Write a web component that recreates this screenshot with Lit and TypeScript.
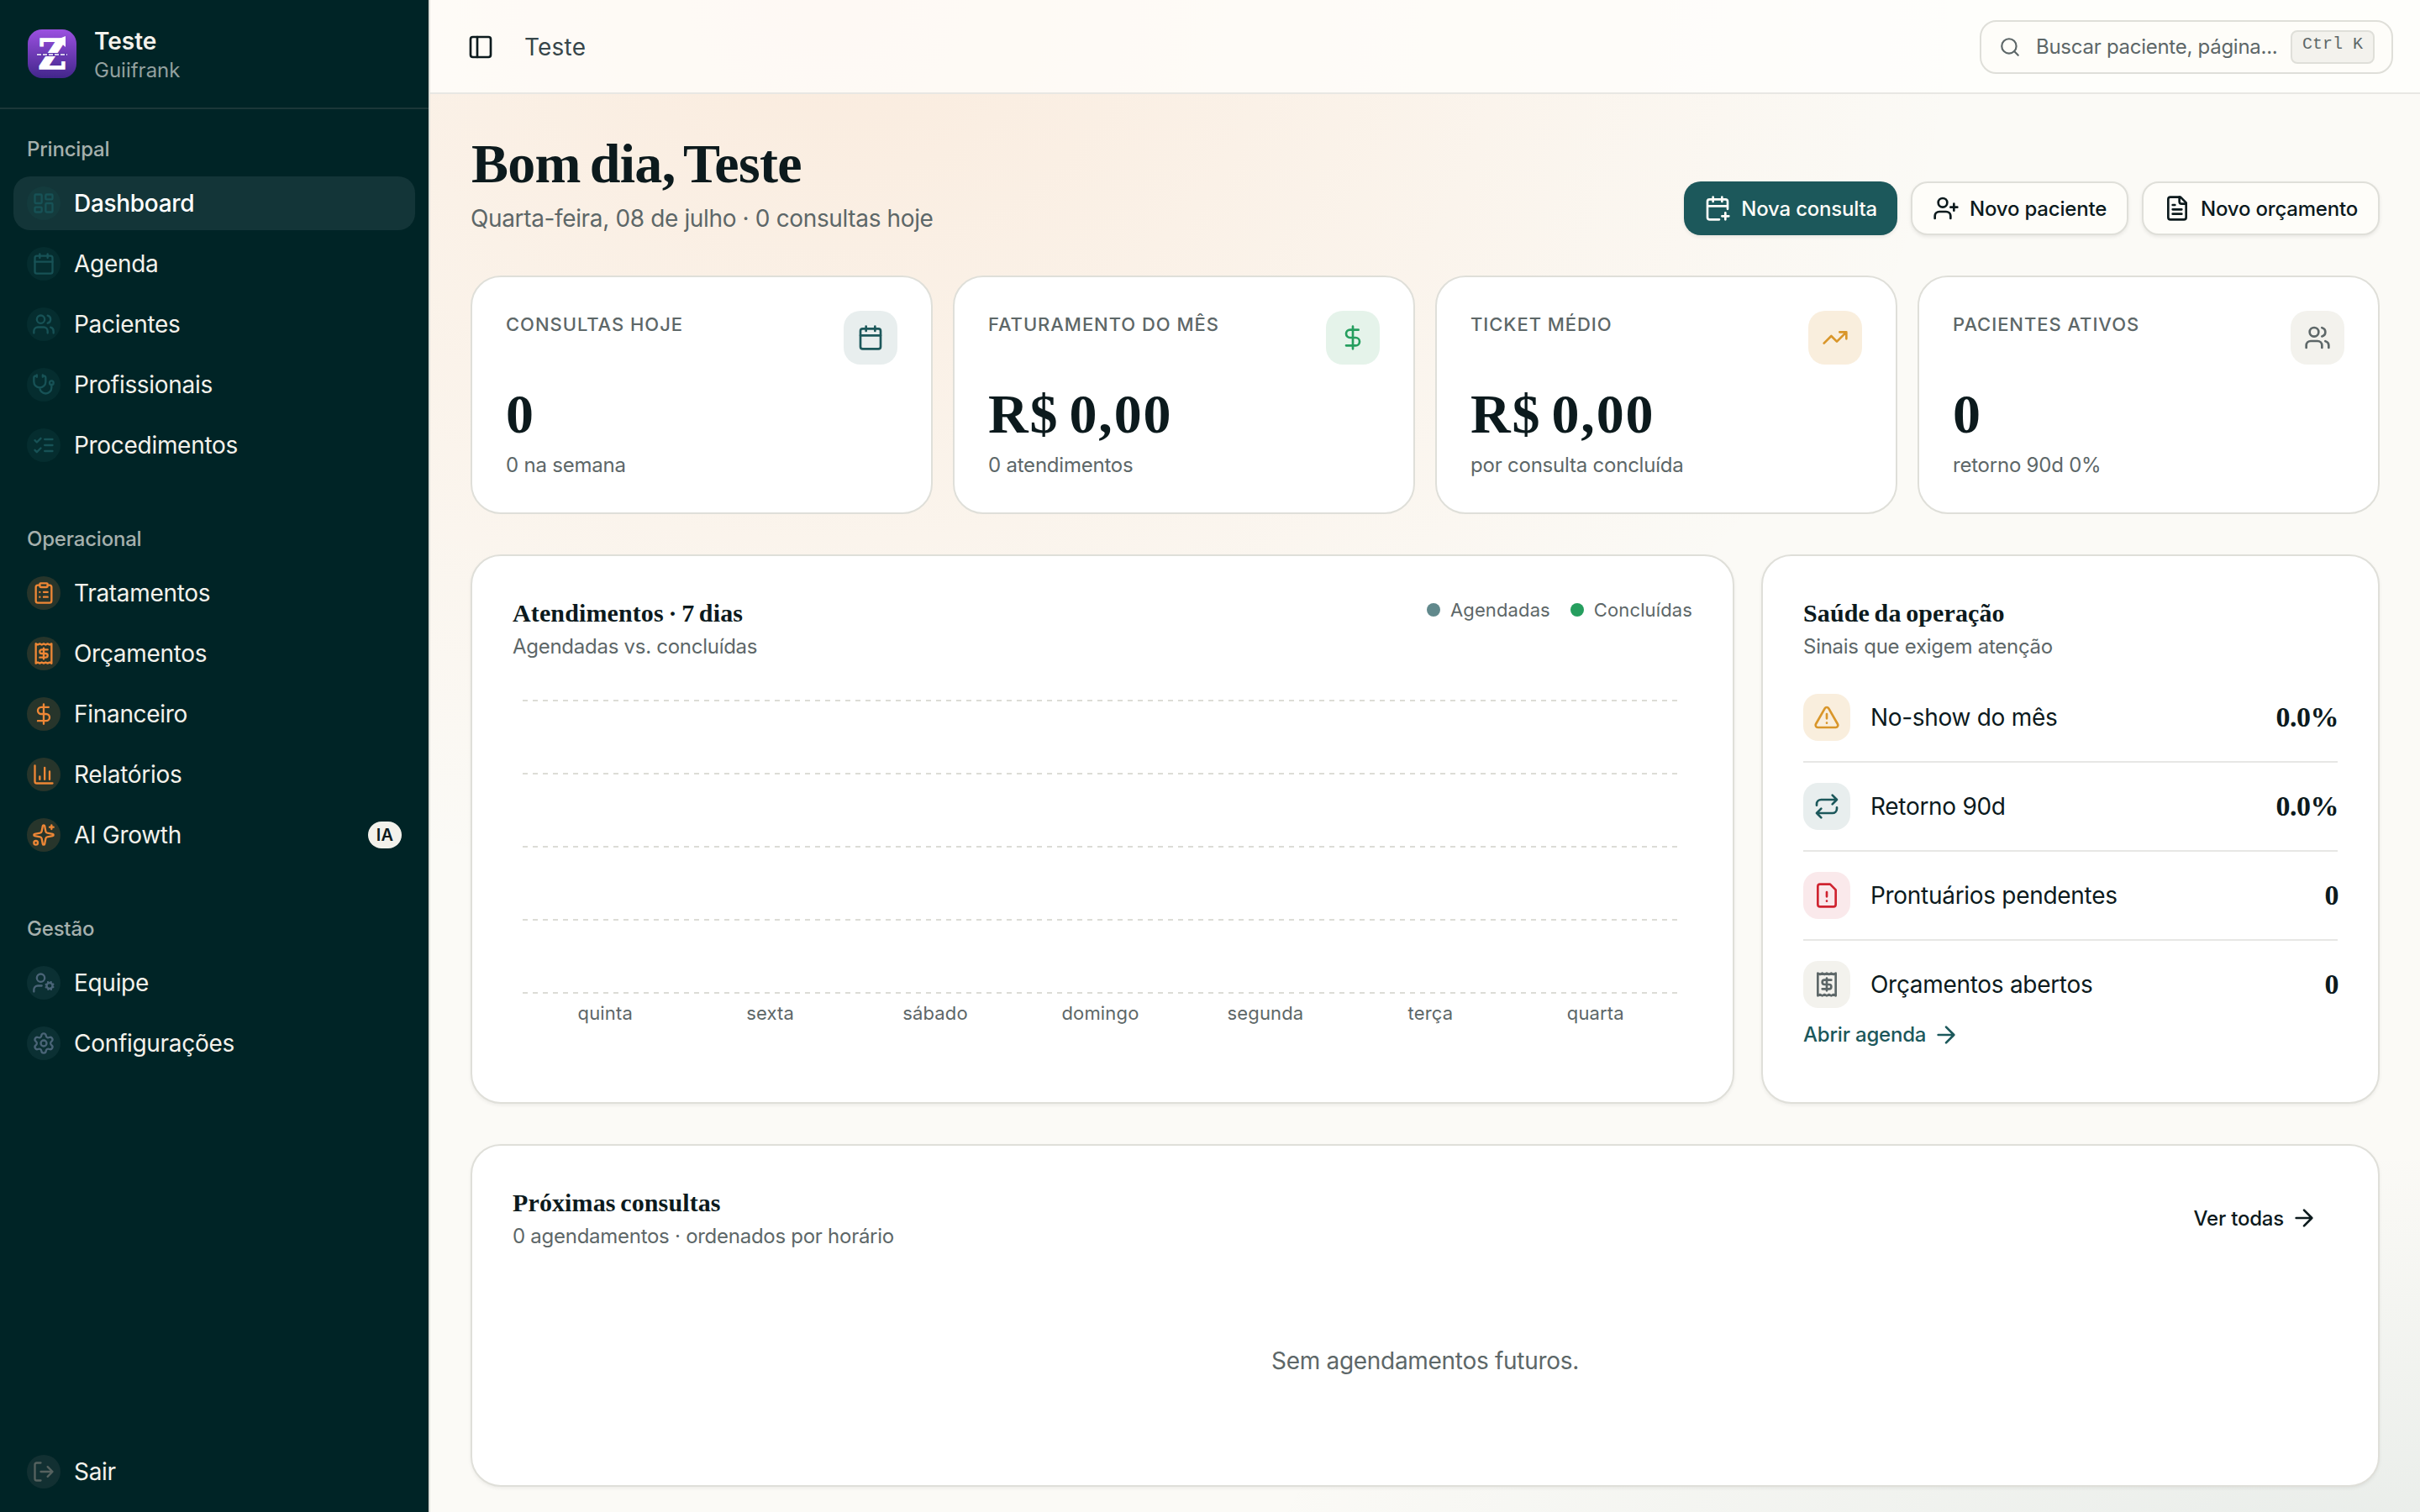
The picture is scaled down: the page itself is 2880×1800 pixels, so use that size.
import { LitElement, css, html, svg, nothing } from 'lit';
import { customElement, property } from 'lit/decorators.js';
import { classMap } from 'lit/directives/class-map.js';

type Tone = 'teal' | 'orange' | 'slate' | 'muted' | 'green' | 'amber' | 'red';

interface NavItem {
    label: string;
    icon: string;
    badge?: string;
    active?: boolean;
}

interface NavGroup {
    label: string;
    tone: Tone;
    items: NavItem[];
}

const userBody = svg`<path d="M16 21v-2a4 4 0 0 0-4-4H6a4 4 0 0 0-4 4v2"/><circle cx="9" cy="7" r="4"/>`;
const fileBody = svg`<path d="M15 2H6a2 2 0 0 0-2 2v16a2 2 0 0 0 2 2h12a2 2 0 0 0 2-2V7Z"/>`;

const icons: Record<string, unknown> = {
    dashboard: svg`<rect x="3" y="3" width="7" height="9" rx="1"/><rect x="14" y="3" width="7" height="5" rx="1"/><rect x="14" y="12" width="7" height="9" rx="1"/><rect x="3" y="16" width="7" height="5" rx="1"/>`,
    calendar: svg`<path d="M8 2v4M16 2v4M3 10h18"/><rect x="3" y="4" width="18" height="18" rx="2"/>`,
    calendarPlus: svg`<path d="M16 19h6M16 2v4M19 16v6M21 12.598V6a2 2 0 0 0-2-2H5a2 2 0 0 0-2 2v14a2 2 0 0 0 2 2h8.5M3 10h18M8 2v4"/>`,
    users: svg`${userBody}<path d="M22 21v-2a4 4 0 0 0-3-3.87M16 3.13a4 4 0 0 1 0 7.75"/>`,
    userPlus: svg`${userBody}<path d="M19 8v6M22 11h-6"/>`,
    userCog: svg`<circle cx="9" cy="7" r="4"/><path d="M10 15H6a4 4 0 0 0-4 4v2"/><circle cx="18" cy="15" r="3"/><path d="m21.7 16.4-.9-.3M15.2 13.9l-.9-.3M16.6 18.7l.3-.9M19.1 12.2l.3-.9M19.6 18.7l-.4-1M16.8 12.3l-.4-1M14.3 16.6l1-.4M20.7 13.8l1-.4"/>`,
    stethoscope: svg`<path d="M11 2v2M5 2v2M5 3H4a2 2 0 0 0-2 2v4a6 6 0 0 0 12 0V5a2 2 0 0 0-2-2h-1M8 15a6 6 0 0 0 12 0v-3"/><circle cx="20" cy="10" r="2"/>`,
    checks: svg`<path d="m3 17 2 2 4-4M3 7l2 2 4-4M13 6h8M13 12h8M13 18h8"/>`,
    clipboard: svg`<rect x="8" y="2" width="8" height="4" rx="1"/><path d="M16 4h2a2 2 0 0 1 2 2v14a2 2 0 0 1-2 2H6a2 2 0 0 1-2-2V6a2 2 0 0 1 2-2h2M12 11h4M12 16h4M8 11h.01M8 16h.01"/>`,
    receipt: svg`<path d="M4 2v20l2-1 2 1 2-1 2 1 2-1 2 1 2-1 2 1V2l-2 1-2-1-2 1-2-1-2 1-2-1-2 1Z"/><path d="M16 8h-6a2 2 0 1 0 0 4h4a2 2 0 1 1 0 4H8M12 17.5v-11"/>`,
    dollar: svg`<path d="M12 2v20M17 5H9.5a3.5 3.5 0 0 0 0 7h5a3.5 3.5 0 0 1 0 7H6"/>`,
    chart: svg`<path d="M3 3v16a2 2 0 0 0 2 2h16M18 17V9M13 17V5M8 17v-3"/>`,
    sparkles: svg`<path d="M11.017 2.814a1 1 0 0 1 1.966 0l1.051 5.558a2 2 0 0 0 1.594 1.594l5.558 1.051a1 1 0 0 1 0 1.966l-5.558 1.051a2 2 0 0 0-1.594 1.594l-1.051 5.558a1 1 0 0 1-1.966 0l-1.051-5.558a2 2 0 0 0-1.594-1.594l-5.558-1.051a1 1 0 0 1 0-1.966l5.558-1.051a2 2 0 0 0 1.594-1.594zM20 2v4M22 4h-4"/><circle cx="4" cy="20" r="2"/>`,
    settings: svg`<path d="M9.671 4.136a2.34 2.34 0 0 1 4.659 0 2.34 2.34 0 0 0 3.319 1.915 2.34 2.34 0 0 1 2.33 4.033 2.34 2.34 0 0 0 0 3.831 2.34 2.34 0 0 1-2.33 4.033 2.34 2.34 0 0 0-3.319 1.915 2.34 2.34 0 0 1-4.659 0 2.34 2.34 0 0 0-3.32-1.915 2.34 2.34 0 0 1-2.33-4.033 2.34 2.34 0 0 0 0-3.831A2.34 2.34 0 0 1 6.35 6.051a2.34 2.34 0 0 0 3.319-1.915"/><circle cx="12" cy="12" r="3"/>`,
    logout: svg`<path d="M9 21H5a2 2 0 0 1-2-2V5a2 2 0 0 1 2-2h4M16 17l5-5-5-5M21 12H9"/>`,
    panel: svg`<rect x="3" y="3" width="18" height="18" rx="2"/><path d="M9 3v18"/>`,
    search: svg`<circle cx="11" cy="11" r="8"/><path d="m21 21-4.3-4.3"/>`,
    fileText: svg`${fileBody}<path d="M14 2v4a2 2 0 0 0 2 2h4M10 9H8M16 13H8M16 17H8"/>`,
    fileWarning: svg`${fileBody}<path d="M12 9v4M12 17h.01"/>`,
    trending: svg`<path d="M16 7h6v6M22 7l-8.5 8.5-5-5L2 17"/>`,
    alert: svg`<path d="m21.73 18-8-14a2 2 0 0 0-3.48 0l-8 14A2 2 0 0 0 4 21h16a2 2 0 0 0 1.73-3M12 9v4M12 17h.01"/>`,
    repeat: svg`<path d="m17 2 4 4-4 4M3 11v-1a4 4 0 0 1 4-4h14M7 22l-4-4 4-4M21 13v1a4 4 0 0 1-4 4H3"/>`,
    arrow: svg`<path d="M5 12h14M12 5l7 7-7 7"/>`,
};

const navigation: NavGroup[] = [
    {
        label: 'Principal',
        tone: 'teal',
        items: [
            { label: 'Dashboard', icon: 'dashboard', active: true },
            { label: 'Agenda', icon: 'calendar' },
            { label: 'Pacientes', icon: 'users' },
            { label: 'Profissionais', icon: 'stethoscope' },
            { label: 'Procedimentos', icon: 'checks' },
        ],
    },
    {
        label: 'Operacional',
        tone: 'orange',
        items: [
            { label: 'Tratamentos', icon: 'clipboard' },
            { label: 'Orçamentos', icon: 'receipt' },
            { label: 'Financeiro', icon: 'dollar' },
            { label: 'Relatórios', icon: 'chart' },
            { label: 'AI Growth', icon: 'sparkles', badge: 'IA' },
        ],
    },
    {
        label: 'Gestão',
        tone: 'slate',
        items: [
            { label: 'Equipe', icon: 'userCog' },
            { label: 'Configurações', icon: 'settings' },
        ],
    },
];

const kpis: { label: string; value: string; hint: string; icon: string; tone: Tone }[] = [
    { label: 'Consultas hoje', value: '0', hint: '0 na semana', icon: 'calendar', tone: 'teal' },
    { label: 'Faturamento do mês', value: 'R$ 0,00', hint: '0 atendimentos', icon: 'dollar', tone: 'green' },
    { label: 'Ticket médio', value: 'R$ 0,00', hint: 'por consulta concluída', icon: 'trending', tone: 'amber' },
    { label: 'Pacientes ativos', value: '0', hint: 'retorno 90d 0%', icon: 'users', tone: 'muted' },
];

const signals: { label: string; value: string; icon: string; tone: Tone }[] = [
    { label: 'No-show do mês', value: '0.0%', icon: 'alert', tone: 'amber' },
    { label: 'Retorno 90d', value: '0.0%', icon: 'repeat', tone: 'teal' },
    { label: 'Prontuários pendentes', value: '0', icon: 'fileWarning', tone: 'red' },
    { label: 'Orçamentos abertos', value: '0', icon: 'receipt', tone: 'muted' },
];

const weekdays = ['quinta', 'sexta', 'sábado', 'domingo', 'segunda', 'terça', 'quarta'];

@customElement('ui-icon')
export class UiIcon extends LitElement {
    @property() name = '';

    static styles = css`
        :host {
          display: block;
          flex: none;
          width: var(--icon-size, 32px);
          height: var(--icon-size, 32px);
        }

        svg {
          display: block;
          width: 100%;
          height: 100%;
          fill: none;
          stroke: currentColor;
          stroke-width: 2;
          stroke-linecap: round;
          stroke-linejoin: round;
        }
    `;

    render() {
        return html`<svg viewBox="0 0 24 24" aria-hidden="true">${icons[this.name]}</svg>`;
    }
}

@customElement('app-sidebar')
export class AppSidebar extends LitElement {
    static styles = css`
        :host {
          display: flex;
          flex-direction: column;
          box-sizing: border-box;
          width: 512px;
          height: 100%;
          background: #002426;
          border-right: 2px solid #dfdfd9;
          color: #f4f2ec;
          font-size: 28px;
        }

        .brand {
          display: flex;
          align-items: center;
          gap: 20px;
          height: 128px;
          padding: 0 32px;
          border-bottom: 2px solid #1b3738;
        }

        .logo {
          width: 60px;
          height: 60px;
        }

        .logo text {
          font-family: 'DejaVu Serif', serif;
          font-weight: 700;
          font-size: 49px;
        }

        .brand-text {
          display: flex;
          flex-direction: column;
          padding-top: 4px;
        }

        .brand-name {
          font-weight: 600;
          line-height: 36px;
        }

        .brand-user {
          color: #93a09f;
          font-size: 24px;
          line-height: 34px;
        }

        nav {
          display: flex;
          flex-direction: column;
          flex: 1;
          gap: 16px;
        }

        .group,
        footer {
          display: flex;
          flex-direction: column;
          gap: 8px;
          padding: 16px;
        }

        .group-label {
          height: 64px;
          margin-bottom: -8px;
          padding: 0 16px;
          color: #a5b0ad;
          font-size: 24px;
          font-weight: 500;
          letter-spacing: -0.2px;
          line-height: 64px;
        }

        .item {
          display: flex;
          align-items: center;
          gap: 16px;
          height: 64px;
          padding: 0 16px;
          border-radius: 20px;
        }

        .item.active {
          background: #133538;
          color: #fff;
          font-weight: 500;
        }

        .item .label {
          flex: 1;
          letter-spacing: -0.3px;
        }

        .disc {
          --icon-size: 28px;
          display: grid;
          place-items: center;
          width: 40px;
          height: 40px;
          border-radius: 50%;
        }

        .disc.teal {
          background: rgba(28, 88, 91, 0.18);
          color: #175256;
        }

        .disc.orange {
          background: #27352b;
          color: #ee8736;
        }

        .disc.slate {
          background: #0b3033;
          color: #4a6477;
        }

        .disc.muted {
          background: #123032;
          color: #56625f;
        }

        .badge {
          box-sizing: border-box;
          width: 40px;
          height: 32px;
          border-radius: 16px;
          background: #f3f1eb;
          color: #0b1a1c;
          font-size: 20px;
          font-weight: 600;
          letter-spacing: 0.3px;
          line-height: 32px;
          text-align: center;
        }
    `;

    private renderItem(item: NavItem, tone: Tone) {
        return html`
            <a class=${classMap({ item: true, active: !!item.active })}>
                <span class="disc ${tone}"><ui-icon name=${item.icon}></ui-icon></span>
                <span class="label">${item.label}</span>
                ${item.badge ? html`<span class="badge">${item.badge}</span>` : nothing}
            </a>
        `;
    }

    render() {
        return html`
            <div class="brand">
                <svg class="logo" viewBox="0 0 60 60">
                    <defs>
                        <linearGradient id="logo-fill" x1="0" y1="0" x2="0" y2="1">
                            <stop offset="0" stop-color="#9b50e0" />
                            <stop offset="1" stop-color="#42268b" />
                        </linearGradient>
                    </defs>
                    <rect x="1" y="1" width="58" height="58" rx="17" fill="url(#logo-fill)" />
                    <text x="30" y="48" text-anchor="middle" textLength="33" lengthAdjust="spacingAndGlyphs" fill="#fff" stroke="#fff" stroke-width="1.5">Z</text>
                    <path d="M36 13l10-4v13z" fill="#fff" />
                    <path d="M12 31h36" stroke="#6036ae" stroke-width="4" />
                    <path d="M12 31h36" stroke="#fff" stroke-width="1.6" stroke-dasharray="5 2" />
                </svg>
                <div class="brand-text">
                    <span class="brand-name">Teste</span>
                    <span class="brand-user">Guiifrank</span>
                </div>
            </div>
            <nav>
                ${navigation.map(group => html`
                    <div class="group">
                        <div class="group-label">${group.label}</div>
                        ${group.items.map(item => this.renderItem(item, group.tone))}
                    </div>
                `)}
            </nav>
            <footer>${this.renderItem({ label: 'Sair', icon: 'logout' }, 'muted')}</footer>
        `;
    }
}

@customElement('app-root')
export class AppRoot extends LitElement {
    static styles = css`
        :host {
          --ink: #0c1a1d;
          --muted: #5d6768;
          --line: #dfdfd9;
          --serif: 'Liberation Serif', serif;
          display: flex;
          width: 2880px;
          height: 1800px;
          overflow: hidden;
          color: var(--ink);
          font-family: Inter, sans-serif;
          font-size: 28px;
        }

        .page {
          display: flex;
          flex-direction: column;
          flex: 1;
          min-width: 0;
          background:
            radial-gradient(ellipse 1350px 1080px at 20% 0%, rgba(244, 150, 80, 0.15), transparent),
            radial-gradient(ellipse 1400px 520px at 100% 105%, rgba(28, 88, 91, 0.09), transparent),
            #fbfaf6;
        }

        .topbar {
          display: flex;
          align-items: center;
          justify-content: space-between;
          box-sizing: border-box;
          height: 112px;
          padding: 2px 32px 0 44px;
          border-bottom: 2px solid #e8e7e3;
          background: rgba(255, 255, 253, 0.7);
        }

        .crumb {
          display: flex;
          align-items: center;
          gap: 36px;
        }

        .crumb-text {
          color: #37464a;
          letter-spacing: 0.2px;
        }

        .search {
          --icon-size: 26px;
          display: flex;
          align-items: center;
          box-sizing: border-box;
          width: 492px;
          height: 64px;
          padding: 0 20px 0 21px;
          border: 2px solid var(--line);
          border-radius: 20px;
          background: #fefdf9;
          color: var(--muted);
          font-size: 24px;
        }

        .search .hint {
          flex: 1;
          margin-left: 18px;
          letter-spacing: -0.27px;
          line-height: 34px;
          margin-top: -1px;
          white-space: nowrap;
        }

        kbd {
          box-sizing: border-box;
          height: 40px;
          padding: 0 12px;
          border: 2px solid var(--line);
          border-radius: 8px;
          background: #f3f2ed;
          font-family: 'Liberation Mono', monospace;
          font-size: 20px;
          line-height: 29px;
          white-space: pre;
        }

        main {
          display: flex;
          flex-direction: column;
          gap: 48px;
          padding: 48px 48px 30px;
        }

        .hero {
          display: flex;
          align-items: flex-end;
          justify-content: space-between;
        }

        h1 {
          margin: 1px 0 10px 1px;
          font-family: var(--serif);
          font-size: 66px;
          font-weight: 700;
          letter-spacing: -0.7px;
          line-height: 68px;
          word-spacing: -5px;
        }

        .subtitle {
          margin: 0 0 -1px;
          color: var(--muted);
          letter-spacing: -0.36px;
          line-height: 42px;
        }

        .actions {
          display: flex;
          gap: 16px;
        }

        .button {
          display: flex;
          align-items: center;
          gap: 12px;
          box-sizing: border-box;
          height: 64px;
          padding: 0 24px;
          border: 2px solid var(--line);
          border-radius: 20px;
          background: #fefdf9;
          font-size: 24px;
          font-weight: 500;
          letter-spacing: -0.2px;
          white-space: nowrap;
          box-shadow: 0 2px 4px rgba(0, 0, 0, 0.08);
        }

        .button.primary {
          border: 0;
          background: #1c585b;
          color: #fdfcf8;
        }

        .button.plain {
          gap: 8px;
          border: 0;
          background: none;
          box-shadow: none;
        }

        .kpis {
          display: grid;
          grid-template-columns: repeat(4, 1fr);
          gap: 24px;
        }

        .card {
          box-sizing: border-box;
          padding: 48px;
          border: 2px solid var(--line);
          border-radius: 36px;
          background: #fff;
          box-shadow: 0 2px 4px rgba(0, 0, 0, 0.06);
        }

        .kpi {
          height: 284px;
          padding: 40px;
          box-shadow: none;
        }

        .kpi-top {
          display: flex;
          justify-content: space-between;
        }

        .kpi-label {
          color: var(--muted);
          font-size: 22px;
          font-weight: 500;
          letter-spacing: 0.95px;
          line-height: 32px;
          text-transform: uppercase;
        }

        .kpi-value {
          margin-top: 25px;
          font-family: var(--serif);
          font-size: 66px;
          font-weight: 700;
          letter-spacing: 1.8px;
          line-height: 68px;
          word-spacing: -6px;
        }

        .kpi-hint {
          margin-top: 10px;
          color: var(--muted);
          font-size: 24px;
          letter-spacing: -0.22px;
          line-height: 34px;
        }

        .chip {
          display: grid;
          place-items: center;
          width: 64px;
          height: 64px;
          border-radius: 20px;
        }

        .chip.small {
          width: 56px;
          height: 56px;
          border-radius: 18px;
        }

        .chip.teal {
          background: #e8eeee;
          color: #1c585b;
        }

        .chip.green {
          background: #e5f3ea;
          color: #259e5e;
        }

        .chip.amber {
          background: #f9eedd;
          color: #d9962a;
        }

        .chip.red {
          background: #fae9eb;
          color: #cf2430;
        }

        .chip.muted {
          background: #f3f2ed;
          color: var(--muted);
        }

        .panels {
          display: grid;
          grid-template-columns: 1504px 1fr;
          gap: 32px;
        }

        .panels .card {
          height: 654px;
        }

        .card-head {
          display: flex;
          align-items: center;
          justify-content: space-between;
          height: 76px;
        }

        h2 {
          margin: 0 0 3px;
          font-family: var(--serif);
          font-size: 30px;
          font-weight: 700;
          letter-spacing: 0.12px;
          line-height: 40px;
          word-spacing: -2px;
        }

        .card-note {
          margin: 0 0 -1px;
          color: var(--muted);
          font-size: 24px;
          letter-spacing: -0.27px;
          line-height: 34px;
        }

        .legend {
          display: flex;
          align-self: flex-start;
          gap: 24px;
          color: var(--muted);
          font-size: 22px;
          letter-spacing: 0.12px;
          line-height: 32px;
        }

        .legend span {
          display: flex;
          align-items: center;
          gap: 12px;
        }

        .legend span::before {
          content: '';
          width: 16px;
          height: 16px;
          border-radius: 50%;
          background: #61898c;
        }

        .legend .done::before {
          background: #259e5e;
        }

        .grid {
          display: flex;
          flex-direction: column;
          justify-content: space-between;
          height: 350px;
          margin: 47px 18px 0 12px;
        }

        .grid i {
          height: 2px;
          background: repeating-linear-gradient(to right, #dcdcd6 0 6px, transparent 6px 12px);
        }

        .days {
          display: grid;
          grid-template-columns: repeat(7, 1fr);
          margin: 7px 17px 0 12px;
          color: var(--muted);
          font-size: 22px;
          letter-spacing: 0.15px;
          line-height: 32px;
          text-align: center;
        }

        .signals {
          margin-top: 16px;
        }

        .signal {
          display: flex;
          align-items: center;
          gap: 24px;
          padding: 24px 0;
          border-bottom: 2px solid #e7e7e5;
        }

        .signal:last-child {
          padding-bottom: 0;
          border: 0;
        }

        .signal .name {
          flex: 1;
          letter-spacing: -0.3px;
        }

        .signal .value {
          margin-right: -1px;
          font-family: var(--serif);
          font-size: 34px;
          font-weight: 700;
          letter-spacing: -0.5px;
        }

        .link {
          display: flex;
          align-items: center;
          gap: 8px;
          margin-top: 15px;
          color: #1c585b;
          font-size: 24px;
          font-weight: 500;
          letter-spacing: -0.2px;
          line-height: 34px;
        }

        .upcoming {
          height: 408px;
        }

        .empty {
          display: grid;
          place-items: center;
          height: 200px;
          margin-top: 32px;
          color: var(--muted);
          letter-spacing: -0.3px;
        }
    `;

    private renderChart() {
        return html`
            <section class="card">
                <div class="card-head">
                    <div>
                        <h2>Atendimentos · 7 dias</h2>
                        <p class="card-note">Agendadas vs. concluídas</p>
                    </div>
                    <div class="legend"><span>Agendadas</span><span class="done">Concluídas</span></div>
                </div>
                <div class="grid"><i></i><i></i><i></i><i></i><i></i></div>
                <div class="days">${weekdays.map(day => html`<span>${day}</span>`)}</div>
            </section>
        `;
    }

    private renderSignals() {
        return html`
            <section class="card">
                <div class="card-head">
                    <div>
                        <h2>Saúde da operação</h2>
                        <p class="card-note">Sinais que exigem atenção</p>
                    </div>
                </div>
                <div class="signals">
                    ${signals.map(signal => html`
                        <div class="signal">
                            <span class="chip small ${signal.tone}"><ui-icon name=${signal.icon}></ui-icon></span>
                            <span class="name">${signal.label}</span>
                            <span class="value">${signal.value}</span>
                        </div>
                    `)}
                </div>
                <a class="link">Abrir agenda <ui-icon name="arrow"></ui-icon></a>
            </section>
        `;
    }

    render() {
        return html`
            <app-sidebar></app-sidebar>
            <div class="page">
                <header class="topbar">
                    <div class="crumb">
                        <ui-icon name="panel"></ui-icon>
                        <span class="crumb-text">Teste</span>
                    </div>
                    <div class="search">
                        <ui-icon name="search"></ui-icon>
                        <span class="hint">Buscar paciente, página...</span>
                        <kbd>Ctrl K</kbd>
                    </div>
                </header>
                <main>
                    <div class="hero">
                        <div>
                            <h1>Bom dia, Teste</h1>
                            <p class="subtitle">Quarta-feira, 08 de julho · 0 consultas hoje</p>
                        </div>
                        <div class="actions">
                            <a class="button primary"><ui-icon name="calendarPlus"></ui-icon>Nova consulta</a>
                            <a class="button"><ui-icon name="userPlus"></ui-icon>Novo paciente</a>
                            <a class="button"><ui-icon name="fileText"></ui-icon>Novo orçamento</a>
                        </div>
                    </div>
                    <div class="kpis">
                        ${kpis.map(kpi => html`
                            <section class="card kpi">
                                <div class="kpi-top">
                                    <span class="kpi-label">${kpi.label}</span>
                                    <span class="chip ${kpi.tone}"><ui-icon name=${kpi.icon}></ui-icon></span>
                                </div>
                                <div class="kpi-value">${kpi.value}</div>
                                <div class="kpi-hint">${kpi.hint}</div>
                            </section>
                        `)}
                    </div>
                    <div class="panels">${this.renderChart()} ${this.renderSignals()}</div>
                    <section class="card upcoming">
                        <div class="card-head">
                            <div>
                                <h2>Próximas consultas</h2>
                                <p class="card-note">0 agendamentos · ordenados por horário</p>
                            </div>
                            <a class="button plain">Ver todas<ui-icon name="arrow"></ui-icon></a>
                        </div>
                        <div class="empty">Sem agendamentos futuros.</div>
                    </section>
                </main>
            </div>
        `;
    }
}
